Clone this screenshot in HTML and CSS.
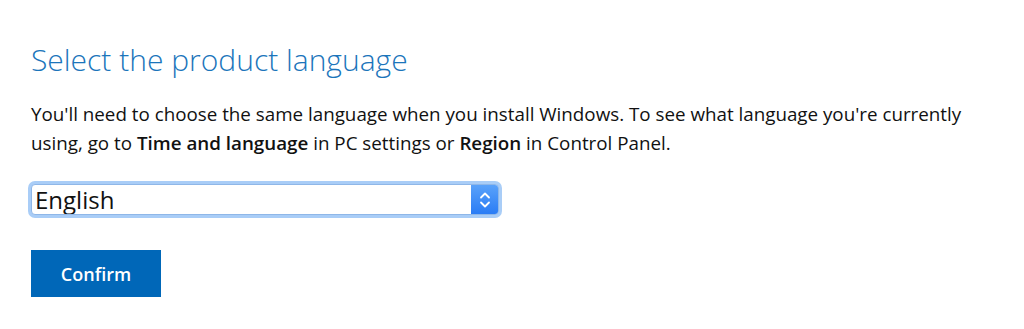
FILE: index.html
```html
<!DOCTYPE html>
<html lang="en">
<head>
<meta charset="utf-8">
<title>Select the product language</title>
<link rel="stylesheet" href="styles.css">
</head>
<body>
<main class="page">
  <h2 class="title">Select the product language</h2>
  <p class="desc">You'll need to choose the same language when you install Windows. To see what language you're currently using, go to <strong>Time and language</strong> in PC settings or <strong>Region</strong> in Control Panel.</p>
  <div class="select">
    <span class="select-value">English</span>
    <span class="select-arrow">
      <svg width="14" height="22" viewBox="0 0 14 22" aria-hidden="true">
        <path d="M3 8.5 L7 4.5 L11 8.5" fill="none" stroke="#fff" stroke-width="1.8" stroke-linecap="round" stroke-linejoin="round"/>
        <path d="M3 13.5 L7 17.5 L11 13.5" fill="none" stroke="#fff" stroke-width="1.8" stroke-linecap="round" stroke-linejoin="round"/>
      </svg>
    </span>
  </div>
  <button class="confirm" type="button">Confirm</button>
</main>
</body>
</html>
```

FILE: styles.css
```css
html, body {
  margin: 0;
  padding: 0;
  background: #fff;
}

.page {
  padding: 40px 0 0 31px;
  font-family: "Open Sans", "Noto Sans", sans-serif;
  color: #000;
  display: flex;
  flex-direction: column;
  align-items: flex-start;
}

.title {
  margin: 0;
  font-family: "Open Sans", sans-serif;
  font-weight: 300;
  font-size: 30px;
  line-height: 40px;
  color: #1b75bb;
}

.desc {
  margin: 20px 0 0;
  width: 945px;
  font-size: 18.8px;
  line-height: 29px;
  color: #111;
}

.desc strong {
  font-weight: 600;
}

.select {
  margin-top: 26px;
  width: 466px;
  height: 29px;
  display: flex;
  align-items: stretch;
  border: 1px solid #8fb7e8;
  border-radius: 4px;
  box-shadow: 0 0 0 3px #a9cdf7;
  background: #fff;
  overflow: hidden;
}

.select-value {
  flex: 1;
  padding-left: 3px;
  font-size: 24px;
  line-height: 30px;
  color: #111;
}

.select-arrow {
  width: 27px;
  display: flex;
  align-items: center;
  justify-content: center;
  background: linear-gradient(#5aa2fa, #2a7cf5);
}

.confirm {
  margin-top: 35px;
  width: 130px;
  height: 47px;
  border: 0;
  padding: 0;
  background: #0067b8;
  color: #fff;
  font-family: "Open Sans", sans-serif;
  font-weight: 600;
  font-size: 18px;
}
```
